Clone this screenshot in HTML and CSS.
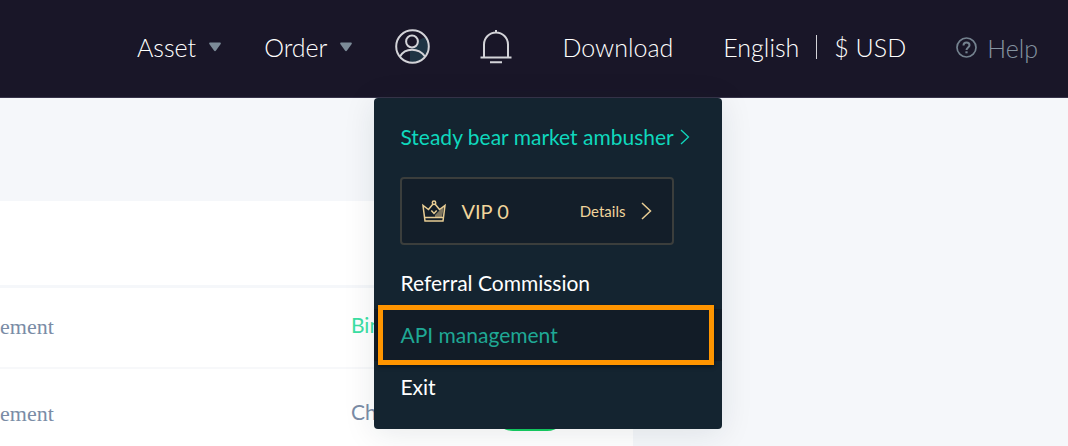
FILE: index.html
```html
<!DOCTYPE html>
<html lang="en">
<head>
  <meta charset="UTF-8">
  <meta name="viewport" content="width=device-width, initial-scale=1">
  <title>API management</title>
  <link rel="stylesheet" href="styles.css">
</head>
<body>

  <header class="topbar">
    <nav class="nav">
      <a href="#" class="drop">Asset
        <svg class="caret" width="12" height="10" viewBox="0 0 12 10"><path d="M1.2 0.5h9.6c.9 0 1.3.9.9 1.6L7 8.6c-.5.8-1.5.8-2 0L.3 2.1C-.1 1.4.3.5 1.2.5z" fill="#7c8b98"/></svg>
      </a>
      <a href="#" class="drop">Order
        <svg class="caret" width="12" height="10" viewBox="0 0 12 10"><path d="M1.2 0.5h9.6c.9 0 1.3.9.9 1.6L7 8.6c-.5.8-1.5.8-2 0L.3 2.1C-.1 1.4.3.5 1.2.5z" fill="#7c8b98"/></svg>
      </a>

      <div class="user">
        <button type="button" class="icon-btn" aria-label="Account">
          <svg width="35" height="35" viewBox="0 0 35 35" fill="none" stroke="#d3d3d8" stroke-width="2">
            <path d="M22 12l6-3 4-1a16.500 16.500 0 0 1-4 21c-2 2-5 3-8 4h-5V20l6-3z" fill="#1e3444" stroke="none"/>
            <circle cx="17.500" cy="17.500" r="16.300"/>
            <circle cx="17" cy="12.500" r="5.900"/>
            <path d="M5 27.500C7.500 23 12 20.700 17 20.700s9.800 2.300 13 6.800"/>
          </svg>
        </button>

        <div class="menu">
          <a href="#" class="nickname">Steady bear market ambusher
            <svg width="10" height="16" viewBox="0 0 10 16" fill="none" stroke="#0fd8bd" stroke-width="1.3"><path d="M1 1l7.500 7L1 15"/></svg>
          </a>
          <a href="#" class="vip">
            <svg width="24" height="22" viewBox="0 0 24 22" fill="none" stroke="#e8cd94" stroke-width="1.5">
              <path d="M13 15l5-5 4-4-2 11h-7z" fill="#7f7660" stroke="none"/>
              <path d="M11 4L6.500 9.500 1 5.500 3 21h18l2-15.500-5.500 4L13 4"/>
              <path d="M3 17.500h18"/>
              <path d="M9.300 10.500l2.700 3 2.700-3"/>
              <circle cx="12" cy="2.700" r="1.700"/>
            </svg>
            <span class="level">VIP 0</span>
            <span class="details">Details</span>
            <svg width="11" height="18" viewBox="0 0 11 18" fill="none" stroke="#e8cd94" stroke-width="1.5"><path d="M1 1l8.500 8L1 17"/></svg>
          </a>
          <a href="#" class="item">Referral Commission</a>
          <a href="#" class="item active">API management</a>
          <a href="#" class="item">Exit</a>
        </div>
      </div>

      <button type="button" class="icon-btn" aria-label="Notifications">
        <svg width="32" height="35" viewBox="0 0 32 35" fill="none" stroke="#d3d3d8" stroke-width="2">
          <path d="M4 28V15.500a12 12 0 0 1 24 0V28M.500 28.500h31M10 33.300h12M16 1v2.500"/>
        </svg>
      </button>

      <a href="#">Download</a>
      <div class="locale">
        <a href="#">English</a>
        <span class="divider"></span>
        <a href="#">$ USD</a>
      </div>
      <a href="#" class="help">
        <svg width="21" height="21" viewBox="0 0 21 21" fill="none" stroke="#74828f" stroke-width="1.7">
          <circle cx="10.500" cy="10.500" r="9.500"/>
          <path d="M7.500 8.500c0-1.800 1.300-2.900 3-2.900s3 1.100 3 2.700c0 2-3 2.300-3 4.700" stroke-width="2"/>
          <path d="M10.500 14.300v2" stroke-width="2.2"/>
        </svg>
        Help
      </a>
    </nav>
  </header>

  <main class="content">
    <table class="settings">
      <colgroup>
        <col class="col-name">
        <col class="col-value">
        <col>
      </colgroup>
      <thead>
        <tr><th colspan="3"></th></tr>
      </thead>
      <tbody>
        <tr>
          <td class="name">ement</td>
          <td class="bind"><a href="#">Bin</a></td>
          <td></td>
        </tr>
        <tr class="tall">
          <td class="name">ement</td>
          <td>Ch</td>
          <td><input type="checkbox" class="switch" aria-label="Enabled" checked></td>
        </tr>
      </tbody>
    </table>
  </main>

</body>
</html>
```
FILE: styles.css
```css
* {
  box-sizing: border-box;
}
body {
  margin: 0;
  font-family: Lato, "Open Sans", sans-serif;
  background-color: #f5f7fa;
  overflow: hidden;
}
a {
  color: inherit;
  text-decoration: none;
}
svg {
  display: block;
  flex: none;
}

/* TOP BAR */
.topbar {
  height: 98px;
  padding: 0 30px 4px;
  background-color: #191628;
  border-bottom: 1px solid #37344a;
}
.nav {
  height: 100%;
  display: flex;
  align-items: center;
  justify-content: flex-end;
  gap: 50px;
  color: #fff;
  font-size: 25px;
  font-weight: 300;
  line-height: 32px;
  white-space: nowrap;
}
.drop {
  display: flex;
  align-items: center;
  gap: 13px;
  margin-right: -7px;
}
.icon-btn {
  display: block;
  padding: 0;
  border: none;
  background: none;
  cursor: pointer;
}
.user {
  position: relative;
}
.locale {
  display: flex;
  align-items: center;
  gap: 17px;
}
.divider {
  width: 1px;
  height: 24px;
  background-color: #d3d3d8;
}
.help {
  display: flex;
  align-items: center;
  gap: 10px;
  padding-top: 2px;
  color: #8593a0;
}

/* ACCOUNT MENU */
.menu {
  position: absolute;
  top: 69px;
  left: -21px;
  z-index: 10;
  width: 348px;
  padding: 26px 0 16px;
  border-radius: 4px;
  background-color: #142430;
  box-shadow: 0 4px 32px rgba(20, 36, 48, 0.1);
  color: #fff;
  font-size: 21px;
  font-weight: 400;
}
.nickname {
  display: flex;
  align-items: center;
  gap: 6px;
  padding-left: 26px;
  line-height: 26px;
  color: #0fd8bd;
}
.vip {
  display: flex;
  align-items: center;
  height: 68px;
  margin: 27px 48px 12px 26px;
  padding: 0 20px;
  border: 2px solid #3b3e3c;
  border-radius: 4px;
  background-color: #131e29;
  color: #f1d59b;
}
.level {
  margin-left: 15px;
  font-size: 20px;
}
.details {
  margin: 0 16px 0 auto;
  font-size: 15px;
}
.item {
  display: block;
  position: relative;
  padding-left: 26px;
  line-height: 52px;
}
.item.active {
  background-color: #121c27;
  color: #1fa895;
}
.item.active::after {
  content: "";
  position: absolute;
  inset: -4px 8px -4px 4px;
  border: 5px solid #ff9500;
  box-shadow: 0 2px 4px rgba(0, 0, 0, 0.4);
}

/* SETTINGS TABLE */
.content {
  margin: 103px 435px 0 0;
}
.settings {
  width: 100%;
  table-layout: fixed;
  border-collapse: collapse;
  background-color: #fff;
  color: #7a8ca6;
  font-size: 21px;
}
.col-name {
  width: 351px;
}
.col-value {
  width: 142px;
}
.settings th {
  height: 85px;
  padding: 0;
  border-bottom: 3px solid #f5f7fa;
}
.settings td {
  height: 82px;
  padding: 0 0 6px;
  border-bottom: 2px solid #f7f8fa;
}
.settings .tall td {
  height: 92px;
}
.settings .name {
  padding: 0;
  font-family: "Liberation Serif", serif;
  font-size: 22px;
}
.bind {
  color: #3be0a4;
}
.switch {
  appearance: none;
  display: block;
  width: 74px;
  height: 40px;
  margin: 0;
  border-radius: 20px;
  background-color: #14cf62;
}
```
